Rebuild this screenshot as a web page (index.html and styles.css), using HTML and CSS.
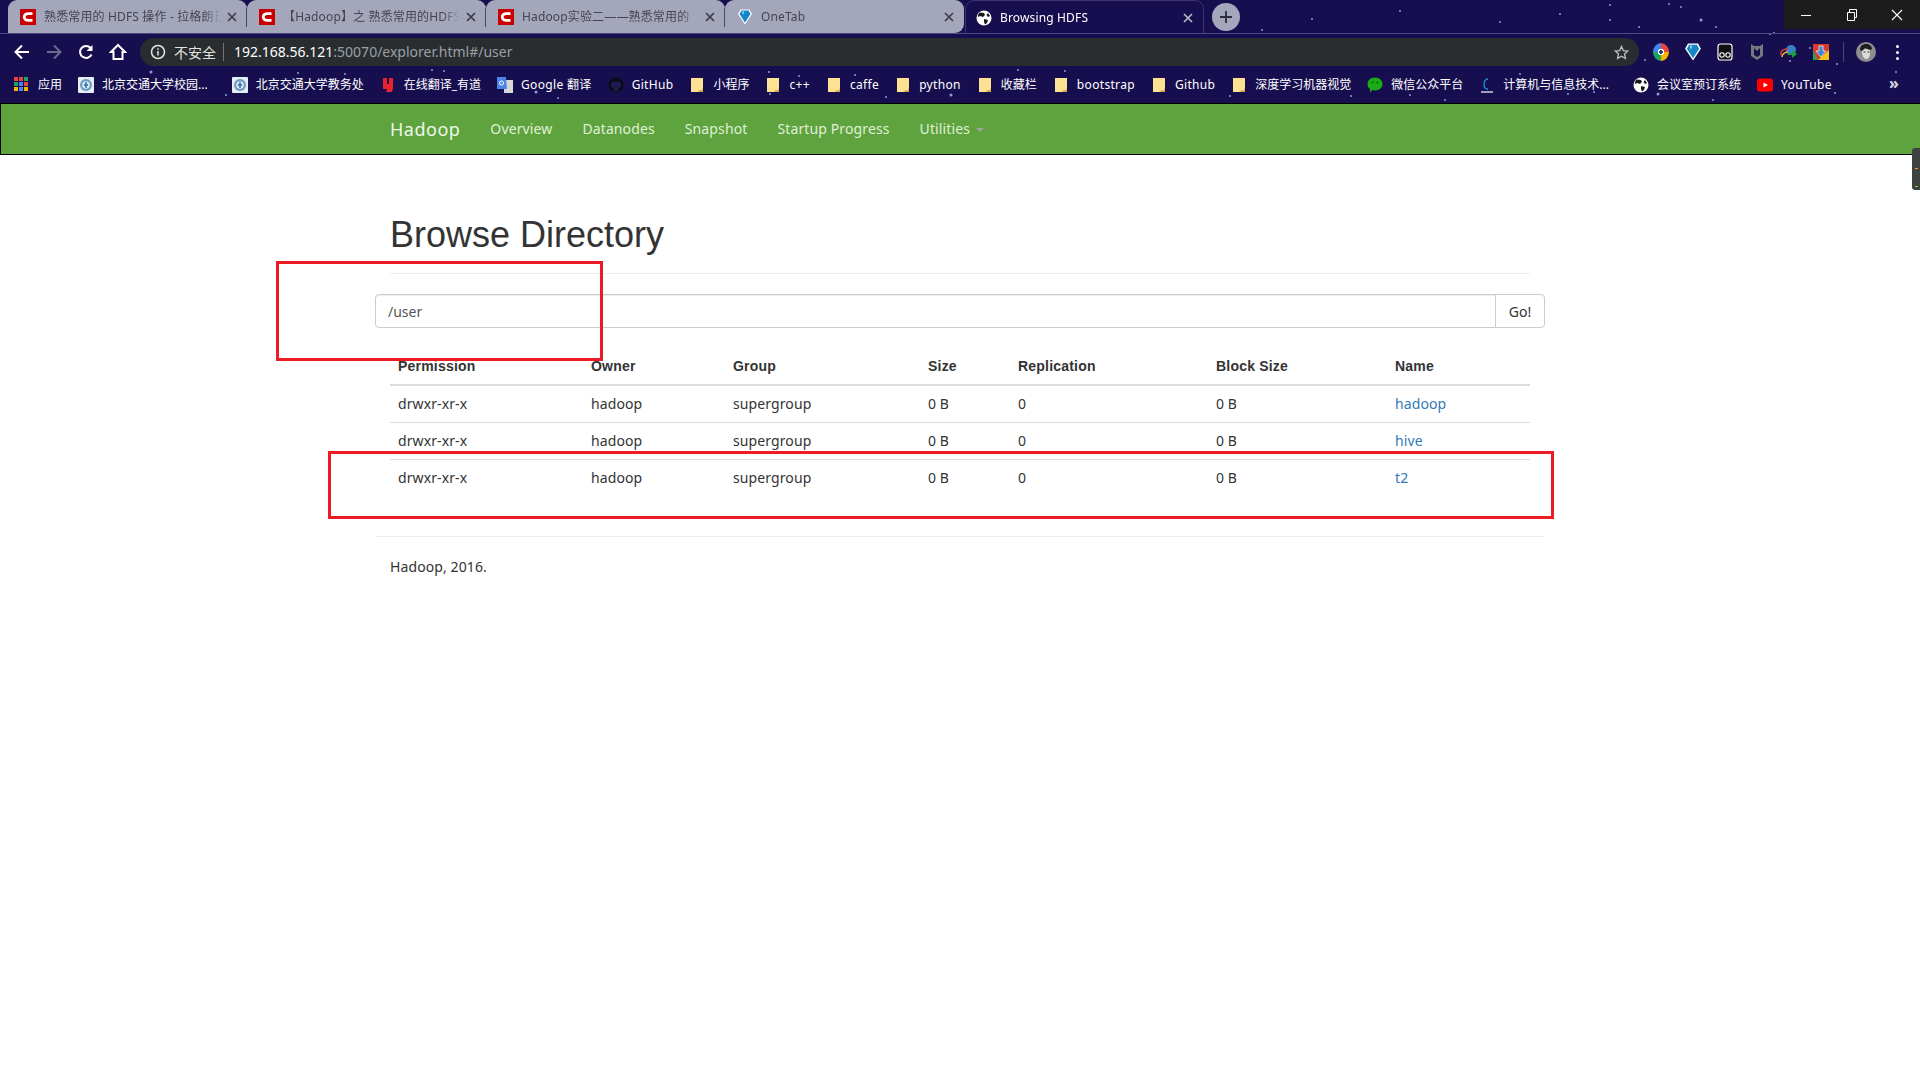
FILE: index.html
```html
<!DOCTYPE html>
<html lang="en">
<head>
    <meta charset="UTF-8">
    <meta name="viewport" content="width=device-width, initial-scale=1.0">
    <title>Browsing HDFS</title>
    <link rel="stylesheet" href="styles.css">
</head>
<body>
    <svg class="defs" width="0" height="0">
        <symbol id="i-csdn" viewBox="0 0 16 16">
            <rect width="16" height="16" fill="#c90000"/>
            <path d="M12.5 4.6H8.2C5.8 4.6 4.2 6.2 4.2 8s1.6 3.4 4 3.4h4.3" fill="none" stroke="#fff" stroke-width="2.8"/>
        </symbol>
        <symbol id="i-x" viewBox="0 0 10 10">
            <path d="M1 1l8 8M9 1l-8 8" fill="none" stroke="currentColor" stroke-width="1.7"/>
        </symbol>
        <symbol id="i-folder" viewBox="0 0 16 16">
            <path d="M2 1h12v14H2z" fill="#fde293"/>
            <path d="M14 11v4h-5l1-1.500 3-.5z" fill="#d9a93f"/>
        </symbol>
        <symbol id="i-globe" viewBox="0 0 16 16">
            <circle cx="8" cy="8" r="7.500" fill="#fff"/>
            <path d="M4 2.500l4 .5 1 2-2 2-3-1-2 1C1.500 5 2.500 3.500 4 2.500zM8 9l4 1-1 3-2 1.500-1-2.500zM12 3l2 3-2 1-1.500-2z" fill="#1a1a1a"/>
        </symbol>
        <symbol id="i-seal" viewBox="0 0 16 16">
            <rect width="16" height="16" rx="1" fill="#e6eef5"/>
            <circle cx="8" cy="8" r="6" fill="#6f9cc4"/>
            <circle cx="8" cy="8" r="3.800" fill="#dbe7f0"/>
            <path d="M8 5v6M6 8h4" stroke="#2f6da3" stroke-width="1.400"/>
        </symbol>
        <symbol id="i-onetab" viewBox="0 0 16 16">
            <path d="M3.500 .5h9L15 5 8 15.500 1 5z" fill="#fff"/>
            <path d="M4.500 1.500h7L13.500 5 8 13.500 2.500 5z" fill="#1487c9"/>
            <path d="M5 2.500h2.500L6 6z" fill="#9fd8f5"/>
        </symbol>
    </svg>

    <header class="browser">
        <!-- star wallpaper of the theme -->
        <svg class="stars" width="1920" height="103">
            <g fill="#8f9ad8">
                <circle cx="151" cy="72" r="1.500"/><circle cx="226" cy="95" r="1"/><circle cx="278" cy="18" r="1"/>
                <circle cx="298" cy="73" r="1"/><circle cx="345" cy="74" r="1"/><circle cx="432" cy="70" r="1"/>
                <circle cx="444" cy="71" r="1"/><circle cx="536" cy="92" r="1.500"/><circle cx="558" cy="98" r="1"/>
                <circle cx="770" cy="94" r="1"/><circle cx="769" cy="72" r="1"/><circle cx="799" cy="76" r="1"/>
                <circle cx="855" cy="75" r="1"/><circle cx="951" cy="95" r="1.500"/><circle cx="886" cy="97" r="1"/>
                <circle cx="1111" cy="14" r="1.500"/><circle cx="1111" cy="30" r="1.500"/><circle cx="1018" cy="70" r="1"/>
                <circle cx="1065" cy="71" r="1"/><circle cx="1230" cy="96" r="1"/><circle cx="1351" cy="96" r="1"/>
                <circle cx="1262" cy="30" r="1"/><circle cx="1312" cy="19" r="1"/><circle cx="1400" cy="11" r="1"/>
                <circle cx="1500" cy="22" r="1"/><circle cx="1560" cy="14" r="1"/><circle cx="1610" cy="20" r="1"/>
                <circle cx="1610" cy="5" r="1"/><circle cx="1681" cy="7" r="1"/><circle cx="1701" cy="20" r="1.500"/>
                <circle cx="1639" cy="27" r="1"/><circle cx="1669" cy="4" r="1"/><circle cx="1716" cy="27" r="1"/>
                <circle cx="1774" cy="33" r="1"/><circle cx="1645" cy="60" r="1"/><circle cx="1790" cy="61" r="1"/>
                <circle cx="1810" cy="48" r="1"/><circle cx="1837" cy="64" r="1"/><circle cx="1770" cy="34" r="1"/>
                <circle cx="1658" cy="94" r="1.500"/><circle cx="1594" cy="92" r="1"/><circle cx="1713" cy="100" r="1"/>
                <circle cx="1568" cy="94" r="1"/><circle cx="1835" cy="93" r="1"/><circle cx="1896" cy="72" r="1"/>
                <circle cx="1445" cy="100" r="1"/><circle cx="1410" cy="95" r="1"/><circle cx="1520" cy="74" r="1"/>
            </g>
        </svg>

        <div class="tabstrip">
            <div class="tab">
                <svg class="favicon"><use href="#i-csdn"/></svg>
                <span class="tab-title">熟悉常用的 HDFS 操作 - 拉格朗日</span>
                <svg class="tab-close"><use href="#i-x"/></svg>
            </div>
            <div class="tab">
                <svg class="favicon"><use href="#i-csdn"/></svg>
                <span class="tab-title">【Hadoop】之 熟悉常用的HDFS</span>
                <svg class="tab-close"><use href="#i-x"/></svg>
            </div>
            <div class="tab">
                <svg class="favicon"><use href="#i-csdn"/></svg>
                <span class="tab-title">Hadoop实验二——熟悉常用的</span>
                <svg class="tab-close"><use href="#i-x"/></svg>
            </div>
            <div class="tab tab-last">
                <svg class="favicon"><use href="#i-onetab"/></svg>
                <span class="tab-title">OneTab</span>
                <svg class="tab-close"><use href="#i-x"/></svg>
            </div>
            <div class="tab tab-active">
                <svg class="favicon"><use href="#i-globe"/></svg>
                <span class="tab-title">Browsing HDFS</span>
                <svg class="tab-close"><use href="#i-x"/></svg>
            </div>
            <div class="new-tab">
                <svg width="14" height="14" viewBox="0 0 14 14"><path d="M7 1v12M1 7h12" stroke="#2c2c3a" stroke-width="1.800"/></svg>
            </div>
            <div class="window-controls">
                <span class="win-btn"><svg width="12" height="12" viewBox="0 0 12 12"><path d="M1 6.500h10" stroke="#fff"/></svg></span>
                <span class="win-btn"><svg width="12" height="12" viewBox="0 0 12 12"><path d="M1.500 3.500h7v8h-7zM3.500 3.500V.5h7v8H8.500" fill="none" stroke="#fff"/></svg></span>
                <span class="win-btn"><svg width="12" height="12" viewBox="0 0 12 12"><path d="M1 1l10 10M11 1L1 11" stroke="#fff" stroke-width="1.100"/></svg></span>
            </div>
        </div>

        <div class="toolbar">
            <span class="tool-btn"><svg width="16" height="16" viewBox="0 0 16 16"><path d="M15 8H2M8 1.500L1.500 8 8 14.500" fill="none" stroke="#fff" stroke-width="2"/></svg></span>
            <span class="tool-btn"><svg width="16" height="16" viewBox="0 0 16 16"><path d="M1 8h13M8 1.500L14.500 8 8 14.500" fill="none" stroke="#6d6a8c" stroke-width="2"/></svg></span>
            <span class="tool-btn"><svg width="16" height="16" viewBox="0 0 16 16"><path d="M13.500 10.500A6 6 0 1 1 12.600 4" fill="none" stroke="#fff" stroke-width="2"/><path d="M14.500 1v6h-6z" fill="#fff"/></svg></span>
            <span class="tool-btn"><svg width="18" height="18" viewBox="0 0 18 18"><path d="M9 2L2 9h2.500v7h9V9H16z" fill="none" stroke="#fff" stroke-width="2"/></svg></span>
            <div class="omnibox">
                <svg class="info-icon" width="16" height="16" viewBox="0 0 16 16">
                    <circle cx="8" cy="8" r="6.500" fill="none" stroke="#e4e4e4" stroke-width="1.500"/>
                    <path d="M8 7v4.500M8 4.200v1.600" stroke="#e4e4e4" stroke-width="1.500"/>
                </svg>
                <span class="not-secure">不安全</span>
                <span class="omni-sep"></span>
                <span class="url">192.168.56.121<span class="url-rest">:50070/explorer.html#/user</span></span>
                <svg class="star-icon" width="15" height="15" viewBox="0 0 16 16">
                    <path d="M8 1.500l2 4.400 4.700.5-3.500 3.200 1 4.700L8 11.900l-4.200 2.400 1-4.700L1.300 6.400 6 5.900z" fill="none" stroke="#bdbdbd" stroke-width="1.400"/>
                </svg>
            </div>
            <div class="extensions">
                <span class="ext"><span class="ext-ring"></span></span>
                <span class="ext"><svg width="18" height="18"><use href="#i-onetab"/></svg></span>
                <span class="ext"><svg width="16" height="18" viewBox="0 0 16 18"><rect x="1" y="1" width="14" height="16" rx="2.500" fill="#111" stroke="#fff" stroke-width="1.200"/><circle cx="5" cy="12" r="2.200" fill="none" stroke="#fff" stroke-width="1.100"/><circle cx="11" cy="12" r="2.200" fill="none" stroke="#fff" stroke-width="1.100"/></svg></span>
                <span class="ext"><svg width="14" height="18" viewBox="0 0 14 18"><path d="M1 1l3 2h6l3-2v12l-6 4-6-4z" fill="#77777f"/><path d="M4 5l3 3 3-3v7l-3 2-3-2z" fill="#15104a"/></svg></span>
                <span class="ext"><svg width="18" height="16" viewBox="0 0 18 16"><circle cx="11" cy="6" r="5" fill="#3a80c9"/><path d="M1 11a6 5 0 0 1 7-6" fill="none" stroke="#e53935" stroke-width="1.500"/><path d="M2 13a6 5 0 0 1 6-5" fill="none" stroke="#fbc02d" stroke-width="1.500"/><path d="M8 9h4V6l5 4-5 4v-3H8z" fill="#1aa33a"/></svg></span>
                <span class="ext"><svg width="16" height="16" viewBox="0 0 16 16"><rect width="16" height="16" fill="#d93a2e"/><path d="M0 6l5 10H0z" fill="#2ba24c"/><path d="M16 6v10H5z" fill="#f6c511"/><path d="M6 2h4v5h3l-5 6-5-6h3z" fill="#3b83d9" stroke="#fff" stroke-width=".7"/></svg></span>
                <span class="ext-sep"></span>
                <span class="avatar"><svg width="20" height="20" viewBox="0 0 20 20"><circle cx="10" cy="10" r="10" fill="#8e8e8e"/><path d="M4 8c0-4 3-6 6-6s6 2 6 5l-2 1-5-2-3 3z" fill="#1c1c1c"/><path d="M6 9l3-2 5 1v4c0 3-2 5-4 5s-4-3-4-8z" fill="#dcdcdc"/><path d="M7.500 10h2M11.500 10h2" stroke="#333"/></svg></span>
                <span class="menu-dots"><i></i><i></i><i></i></span>
            </div>
        </div>

        <div class="bookmarks">
            <span class="bm"><span class="bm-icon apps"><i class="r"></i><i class="r"></i><i class="g"></i><i class="g"></i><i class="b"></i><i class="r"></i><i class="y"></i><i class="b"></i><i class="y"></i></span>应用</span>
            <span class="bm bm-long"><svg class="bm-icon"><use href="#i-seal"/></svg>北京交通大学校园...</span>
            <span class="bm"><svg class="bm-icon"><use href="#i-seal"/></svg>北京交通大学教务处</span>
            <span class="bm"><svg class="bm-icon" viewBox="0 0 16 16"><path d="M3 1h4v6h2V1h4v10l-1 4H6l1-3H3z" fill="#e8232e"/></svg>在线翻译_有道</span>
            <span class="bm bm-latin"><svg class="bm-icon" viewBox="0 0 16 16"><path d="M7 3h9v13H7z" fill="#d8d8d8"/><path d="M0 0h9l1 12H0z" fill="#4a86e8"/><circle cx="4.500" cy="6" r="2" fill="none" stroke="#fff"/></svg>Google 翻译</span>
            <span class="bm bm-latin"><svg class="bm-icon" viewBox="0 0 16 16"><circle cx="8" cy="8" r="7.500" fill="#0c0c14"/><path d="M5.500 14v-2.500c-2-.5-2.500-2-2.500-4l1-1.500V4l2 .8h4L12 4v2l1 1.500c0 2-.5 3.500-2.500 4V14" fill="#1e1a52"/></svg>GitHub</span>
            <span class="bm"><svg class="bm-icon"><use href="#i-folder"/></svg>小程序</span>
            <span class="bm bm-latin"><svg class="bm-icon"><use href="#i-folder"/></svg>c++</span>
            <span class="bm bm-latin"><svg class="bm-icon"><use href="#i-folder"/></svg>caffe</span>
            <span class="bm bm-latin"><svg class="bm-icon"><use href="#i-folder"/></svg>python</span>
            <span class="bm"><svg class="bm-icon"><use href="#i-folder"/></svg>收藏栏</span>
            <span class="bm bm-latin"><svg class="bm-icon"><use href="#i-folder"/></svg>bootstrap</span>
            <span class="bm bm-latin"><svg class="bm-icon"><use href="#i-folder"/></svg>Github</span>
            <span class="bm"><svg class="bm-icon"><use href="#i-folder"/></svg>深度学习机器视觉</span>
            <span class="bm"><svg class="bm-icon" viewBox="0 0 16 16"><path d="M8 .5c4.200 0 7.500 2.900 7.500 6.500s-3.300 6.500-7.500 6.500c-.9 0-1.700-.1-2.500-.4L3 15.500l.2-3.300C1.500 11 .5 9.100.5 7 .5 3.400 3.800.5 8 .5z" fill="#1aad19"/><circle cx="5.500" cy="5.500" r="1" fill="#0b5e0a"/><circle cx="10.500" cy="5.500" r="1" fill="#0b5e0a"/></svg>微信公众平台</span>
            <span class="bm bm-long"><svg class="bm-icon" viewBox="0 0 16 16"><path d="M9 2C6 2 5 5 5 8s1 4 4 4" fill="none" stroke="#1a8fd6" stroke-width="1.300"/><path d="M2 15h12" stroke="#fff" stroke-width="1.200"/></svg>计算机与信息技术...</span>
            <span class="bm"><svg class="bm-icon"><use href="#i-globe"/></svg>会议室预订系统</span>
            <span class="bm bm-latin"><svg class="bm-icon" viewBox="0 0 16 16"><rect y="1.500" width="16" height="13" rx="3" fill="#f00"/><path d="M6.500 5.500v5L11 8z" fill="#fff"/></svg>YouTube</span>
            <span class="bm-more">»</span>
        </div>
    </header>

    <nav class="navbar">
        <div class="nav-inner">
            <a class="brand" href="#">Hadoop</a>
            <a class="nav-link" href="#">Overview</a>
            <a class="nav-link" href="#">Datanodes</a>
            <a class="nav-link" href="#">Snapshot</a>
            <a class="nav-link" href="#">Startup Progress</a>
            <a class="nav-link" href="#">Utilities <span class="caret"></span></a>
        </div>
    </nav>

    <main class="container">
        <div class="page-header">
            <h1>Browse Directory</h1>
        </div>
        <form class="input-group">
            <input class="path-input" type="text" value="/user">
            <button class="go-btn" type="button">Go!</button>
        </form>
        <table class="listing">
            <colgroup>
                <col class="c-perm"><col class="c-owner"><col class="c-group"><col class="c-size">
                <col class="c-repl"><col class="c-block"><col class="c-name">
            </colgroup>
            <thead>
                <tr>
                    <th>Permission</th><th>Owner</th><th>Group</th><th>Size</th>
                    <th>Replication</th><th>Block Size</th><th>Name</th>
                </tr>
            </thead>
            <tbody>
                <tr>
                    <td>drwxr-xr-x</td><td>hadoop</td><td>supergroup</td><td>0 B</td>
                    <td>0</td><td>0 B</td><td><a href="#">hadoop</a></td>
                </tr>
                <tr>
                    <td>drwxr-xr-x</td><td>hadoop</td><td>supergroup</td><td>0 B</td>
                    <td>0</td><td>0 B</td><td><a href="#">hive</a></td>
                </tr>
                <tr>
                    <td>drwxr-xr-x</td><td>hadoop</td><td>supergroup</td><td>0 B</td>
                    <td>0</td><td>0 B</td><td><a href="#">t2</a></td>
                </tr>
            </tbody>
        </table>
        <hr class="footer-line">
        <p class="footer-text">Hadoop, 2016.</p>
    </main>

    <!-- red annotation boxes drawn over the screenshot -->
    <div class="mark mark-input"></div>
    <div class="mark mark-row"></div>

    <div class="side-widget"><i class="tick-orange"></i><i class="tick-green"></i></div>
</body>
</html>
```

FILE: styles.css
```css
* {
    box-sizing: border-box;
}
body {
    margin: 0;
    height: 1078px;
    overflow: hidden;
    position: relative;
    background: #fff;
    color: #333;
    font-family: "Noto Sans", "Liberation Sans", sans-serif;
    font-size: 14px;
    line-height: 20px;
}
a {
    color: #337ab7;
    text-decoration: none;
}
.defs {
    position: absolute;
}

/* Browser frame */
.browser {
    position: relative;
    height: 103px;
    background: #170e4f;
    color: #fff;
    font-family: "Noto Sans", "Noto Sans CJK SC", sans-serif;
    font-size: 12px;
}
.stars {
    position: absolute;
    left: 0;
    top: 0;
}
.tabstrip,
.toolbar,
.bookmarks {
    position: relative;
    display: flex;
    align-items: center;
}
.tabstrip {
    height: 34px;
    padding-left: 8px;
    border-bottom: 1px solid #4f4684;
    align-items: flex-start;
}
.tab {
    width: 239px;
    height: 33px;
    display: flex;
    align-items: center;
    padding: 1px 10px 0 12px;
    background: #a4a7bc;
    color: #45454f;
    border-radius: 9px 9px 0 0;
    position: relative;
}
.tab + .tab::before {
    content: "";
    position: absolute;
    left: -1px;
    top: 8px;
    width: 1px;
    height: 19px;
    background: #4a4a5c;
}
.tab-last {
    border-radius: 9px 9px 9px 0;
}
.tab-active {
    margin-left: 1px;
    padding-left: 10px;
    background: #170e4f;
    color: #fff;
    border: 1px solid #3d3470;
    border-bottom: 0;
}
.tab-active::before {
    display: none;
}
.favicon {
    width: 16px;
    height: 16px;
    flex: none;
}
.tab-title {
    flex: 1;
    min-width: 0;
    margin-left: 8px;
    letter-spacing: .15px;
    white-space: nowrap;
    overflow: hidden;
    -webkit-mask-image: linear-gradient(to right, #000 90%, transparent 100%);
    mask-image: linear-gradient(to right, #000 90%, transparent 100%);
}
.tab-close {
    width: 10px;
    height: 10px;
    flex: none;
    margin-left: 6px;
    color: #3d3d48;
}
.tab-active .tab-close {
    color: #b9b9c6;
}
.new-tab {
    width: 28px;
    height: 28px;
    margin: 3px 0 0 8px;
    border-radius: 50%;
    background: #a4a7bc;
    display: flex;
    align-items: center;
    justify-content: center;
}
.window-controls {
    margin-left: auto;
    display: flex;
    height: 29px;
    background: #1c1c1c;
}
.win-btn {
    width: 45.500px;
    display: flex;
    align-items: center;
    justify-content: center;
}

.toolbar {
    height: 32px;
    padding-left: 6px;
}
.tool-btn {
    width: 32px;
    margin-top: 4px;
    display: flex;
    justify-content: center;
}
.omnibox {
    flex: 1;
    height: 28px;
    margin: 4px 0 0 6px;
    padding: 0 10px;
    border-radius: 14px;
    background: #292d30;
    display: flex;
    align-items: center;
}
.not-secure {
    margin-left: 8px;
    font-family: "Noto Sans CJK SC", sans-serif;
    font-size: 14px;
    color: #e4e4e4;
}
.omni-sep {
    width: 1px;
    height: 18px;
    margin: 0 10px 0 7px;
    background: #70757a;
}
.url {
    font-size: 14px;
    color: #fff;
}
.url-rest {
    color: #9aa0a6;
}
.star-icon {
    margin-left: auto;
}
.extensions {
    width: 281px;
    margin-top: 4px;
    padding-left: 6px;
    display: flex;
    align-items: center;
}
.ext {
    width: 32px;
    height: 20px;
    display: flex;
    align-items: center;
    justify-content: center;
}
.ext-ring {
    width: 16px;
    height: 18px;
    border-radius: 50%;
    background: radial-gradient(circle, #2a3f7c 0 2px, #fff 2px 3px, transparent 3px),
        conic-gradient(#e8453c 0 25%, #f4b400 25% 50%, #1da462 50% 75%, #4285f4 75%);
}
.ext-sep {
    width: 1px;
    height: 20px;
    margin-left: 6px;
    background: #4c4580;
}
.avatar {
    width: 20px;
    height: 20px;
    margin-left: 12px;
    display: flex;
}
.menu-dots {
    margin-left: 20px;
    display: flex;
    flex-direction: column;
    gap: 3px;
}
.menu-dots i {
    width: 3px;
    height: 3px;
    border-radius: 50%;
    background: #fff;
}

.bookmarks {
    height: 37px;
    padding-left: 14px;
    gap: 16px;
    white-space: nowrap;
}
.bm {
    display: flex;
    align-items: center;
    gap: 8px;
}
.bm-latin {
    letter-spacing: .33px;
}
.bm-long {
    margin-right: 8px;
}
.bm-icon {
    width: 16px;
    height: 16px;
    flex: none;
}
.apps {
    display: grid;
    grid-template-columns: repeat(3, 4px);
    grid-auto-rows: 4px;
    gap: 1px;
}
.apps .r { background: #e8453c; }
.apps .g { background: #1da462; }
.apps .b { background: #4285f4; }
.apps .y { background: #f4b400; }
.bm-more {
    position: absolute;
    left: 1889px;
    top: 7px;
    font-size: 16px;
    font-weight: bold;
    color: #d8d8e4;
}

/* Hadoop page */
.navbar {
    height: 52px;
    background: #5fa33e;
    border: 1px solid #000;
    border-right: 0;
}
.nav-inner {
    width: 1170px;
    height: 50px;
    margin-left: 374px;
    padding-left: 15px;
    display: flex;
    align-items: center;
}
.brand {
    font-size: 18px;
    letter-spacing: .5px;
    color: #eef7ea;
    margin-right: 15px;
}
.nav-link {
    padding: 0 15px;
    letter-spacing: .12px;
    color: #dff0d8;
}
.caret {
    display: inline-block;
    width: 0;
    height: 0;
    margin-left: 2px;
    vertical-align: middle;
    border-top: 4px solid #9aa59a;
    border-left: 4px solid transparent;
    border-right: 4px solid transparent;
}

.container {
    width: 1170px;
    margin: 0 auto;
    padding-top: 60px;
    letter-spacing: .1px;
}
.page-header {
    margin: 0 15px 20px;
    padding-bottom: 9px;
    border-bottom: 1px solid #eee;
}
h1 {
    margin: 0 0 9px;
    font-family: "Liberation Sans", Arial, sans-serif;
    font-size: 36px;
    font-weight: 500;
    line-height: 40px;
    letter-spacing: 0;
}
.input-group {
    display: flex;
    height: 34px;
    margin: 0 0 20px;
}
.path-input {
    flex: 1;
    height: 34px;
    padding: 6px 12px;
    border: 1px solid #ccc;
    border-radius: 4px 0 0 4px;
    box-shadow: inset 0 1px 1px rgba(0, 0, 0, .075);
    color: #555;
    font: 14px "Noto Sans", "Liberation Sans", sans-serif;
}
.go-btn {
    width: 50px;
    margin-left: -1px;
    padding: 0;
    border: 1px solid #ccc;
    border-radius: 0 4px 4px 0;
    background: #fff;
    color: #333;
    font: 14px "Noto Sans", "Liberation Sans", sans-serif;
}
.listing {
    width: 1140px;
    margin: 0 15px;
    border-collapse: separate;
    border-spacing: 0;
    table-layout: fixed;
}
.c-perm { width: 193px; }
.c-owner { width: 142px; }
.c-group { width: 195px; }
.c-size { width: 90px; }
.c-repl { width: 198px; }
.c-block { width: 179px; }
.c-name { width: 143px; }
.listing th,
.listing td {
    padding: 8px;
    text-align: left;
}
.listing th {
    font-family: "Liberation Sans", Arial, sans-serif;
    letter-spacing: .2px;
    border-bottom: 2px solid #ddd;
}
.listing tr + tr td {
    border-top: 1px solid #ddd;
}
.footer-line {
    height: 1px;
    margin: 40px 0 20px;
    border: 0;
    background: #eee;
}
.footer-text {
    margin: 0 15px;
}

/* red annotation boxes */
.mark {
    position: absolute;
    border: 3px solid #ed1c24;
}
.mark-input {
    left: 276px;
    top: 261px;
    width: 327px;
    height: 100px;
}
.mark-row {
    left: 328px;
    top: 451px;
    width: 1226px;
    height: 68px;
}

.side-widget {
    position: absolute;
    left: 1912px;
    top: 148px;
    width: 8px;
    height: 42px;
    border-radius: 3px 0 0 3px;
    background: #3f4242;
}
.side-widget i {
    position: absolute;
    left: 3px;
    width: 3px;
    height: 1px;
}
.tick-orange {
    top: 20px;
    background: #f0a020;
}
.tick-green {
    top: 38px;
    background: #7fd020;
}
```
